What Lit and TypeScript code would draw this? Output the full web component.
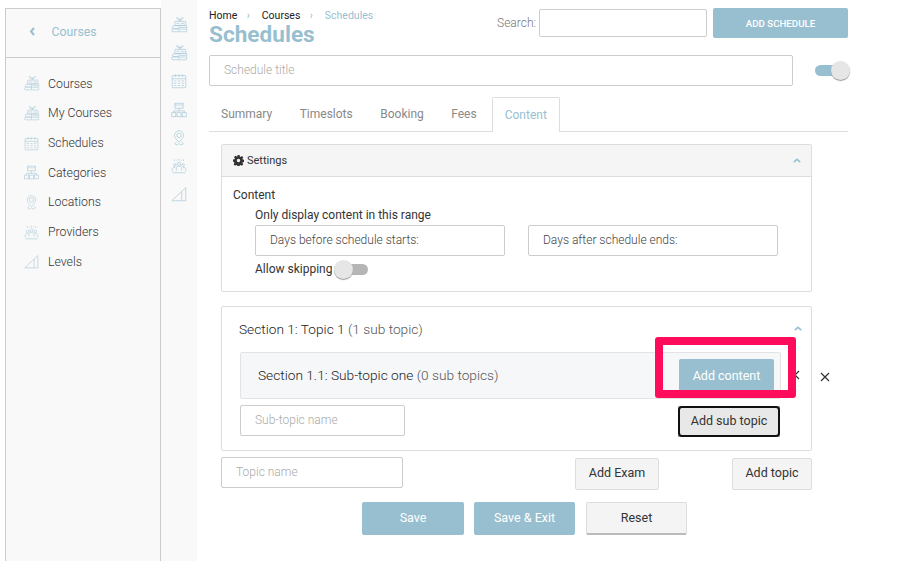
import { LitElement, html, css, svg } from "lit";
import { customElement } from "lit/decorators.js";

const icons: Record<string, unknown> = {
  course: svg`<path d="M11 6V3M11 4.500C10 2.500 8.500 1.800 7.500 1.800c0 1.700 1.500 2.700 3.500 2.700zM11 4.500c1-2 2.500-2.700 3.500-2.700 0 1.700-1.500 2.700-3.500 2.700z"/><rect x="5.500" y="6" width="12" height="4.500" rx=".5"/><path d="M7 8.200h3.500M12 8.200h4"/><rect x="10" y="10.500" width="8.500" height="7" rx=".5"/><path d="M11 12.700h6.500M11 14.500h6.500"/><path d="M10 10.800H4.500a1.700 1.700 0 0 0 0 3.400H10M10 14.200H3.500a1.600 1.600 0 0 0 0 3.300H10"/>`,
  calendar: svg`<rect x="2.500" y="4" width="15" height="13.500" rx=".8"/><path d="M2.500 7.500h15M6 2.500v3M10 2.500v3M14 2.500v3"/><path d="M4.500 10h2.500M8.800 10h2.500M13 10h2.500M4.500 12.500h2.500M8.800 12.500h2.500M13 12.500h2.500M4.500 15h2.500M8.800 15h2.500M13 15h2.500"/>`,
  tree: svg`<rect x="5.500" y="2.500" width="9" height="5.500"/><path d="M5.500 4.500h9M10 8v3M4 13v-2h12v2"/><rect x="2" y="13" width="4.500" height="4.500"/><rect x="7.800" y="13" width="4.500" height="4.500"/><rect x="13.500" y="13" width="4.500" height="4.500"/>`,
  pin: svg`<path d="M10 14.500c-3-3-5-5-5-7.500a5 5 0 0 1 10 0c0 2.500-2 4.500-5 7.500z"/><circle cx="10" cy="7" r="2.500"/><path d="M7.500 14.500c-1.500.5-2 1.200-2 1.800 0 .8 1 1.200 2 1.200 1.200 0 2-.5 2.500-1.500.5 1 1.300 1.500 2.500 1.500 1 0 2-.4 2-1.200 0-.6-.5-1.300-2-1.800"/>`,
  people: svg`<circle cx="10" cy="7.500" r="1.800"/><circle cx="5.500" cy="9" r="1.500"/><circle cx="14.500" cy="9" r="1.500"/><path d="M7 15v-2.500c0-1.500 1.500-2.500 3-2.500s3 1 3 2.500V15M2.500 16v-2.500c0-1.200 1-2 3-2M17.500 16v-2.500c0-1.200-1-2-3-2M3 17.500h14M5 2.500v2M10 2v2M15 2.500v2M7.500 3v1M12.500 3v1"/>`,
  level: svg`<path d="M2 17.500 17.500 3v14.500zM13 17.500V7.500"/>`,
};

const ico = (n: string) =>
  html`<svg class="ico" viewBox="0 0 20 20" fill="none" stroke="currentColor" stroke-width=".8">${icons[n]}</svg>`;

const nav = [
  ["course", "Courses"],
  ["course", "My Courses"],
  ["calendar", "Schedules"],
  ["tree", "Categories"],
  ["pin", "Locations"],
  ["people", "Providers"],
  ["level", "Levels"],
];

const up = html`<svg class="chev" viewBox="0 0 10 6" fill="none" stroke="currentColor" stroke-width="2"><path d="M1 5l4-3.500L9 5"/></svg>`;

@customElement("app-root")
export class AppRoot extends LitElement {
  static styles = css`
    :host { display: block; width: 913px; height: 561px; overflow: hidden; background: #fff;
      font-family: Roboto, "Liberation Sans", sans-serif; font-size: 12px; font-weight: 300; color: #444; position: relative; }
    * { box-sizing: border-box; }
    .page { display: flex; height: 561px; padding-left: 5px; }
    .sidebar { width: 156px; margin-top: 8px; background: #f9f9f9; border: 1px solid #ccc; border-bottom: 0; flex: none; }
    .side-head { height: 49px; border-bottom: 1px solid #ccc; display: flex; align-items: center; padding: 0 0 3px 23px; color: #97bfd0; font-size: 12.300px; font-weight: 400; }
    .side-head svg { width: 7px; height: 9px; margin-right: 15.500px; }
    .side-nav { padding-top: 11px; display: flex; flex-direction: column; }
    .side-nav a { height: 29.650px; display: flex; align-items: center; padding-left: 17px; gap: 8px; font-size: 12.300px; color: #333; }
    .ico { width: 17px; height: 17px; color: #b0cedb; flex: none; }
    .rail { width: 36px; flex: none; background: #f9f9f9; padding-top: 11px; display: flex; flex-direction: column; align-items: center; }
    .rail span { height: 28.200px; display: flex; align-items: center; justify-content: center; }
    .rail .ico { width: 18px; height: 18px; color: #a8c9d8; }
    main { width: 639px; margin-left: 12px; flex: none; display: flex; flex-direction: column; }
    .top { display: flex; height: 47px; align-items: flex-start; }
    .crumb-wrap { flex: 1; padding-top: 9px; }
    .crumb { font-size: 10.500px; line-height: 13px; color: #222; display: flex; gap: 9.500px; align-items: center; font-weight: 400; }
    .crumb i { font-style: normal; color: #97bfd0; font-size: 10px; font-weight: 500; width: 5.500px; }
    .crumb b { font-weight: 400; color: #97bfd0; }
    h1 { margin: -1px 0 0; font-size: 22.600px; line-height: 28px; font-weight: 700; color: #97bfd0; }
    .search { display: flex; align-items: center; gap: 3px; margin-top: 9px; color: #777; font-size: 12px; }
    .field { border: 1px solid #ccc; border-radius: 2px; background: #fff; display: flex; align-items: center; color: #aaa; font-size: 12px; padding-bottom: 1px; }
    .search .field { width: 168px; height: 28px; }
    .primary { background: #97bfd0; color: #fff; border: 0; border-radius: 2px; font: inherit; font-weight: 400; display: flex; align-items: center; justify-content: center; }
    .add-sched { width: 135px; height: 30px; margin: 8px 0 0 6px; font-size: 9.700px; font-weight: 500; }
    .title-row { display: flex; align-items: center; margin-top: 8px; }
    .title-row .field { width: 584.500px; height: 31px; padding-left: 14px; }
    .toggle { position: relative; width: 33px; height: 11px; border-radius: 6px; background: #97bfd0; flex: none; }
    .toggle::after { content: ""; position: absolute; top: -4px; width: 19px; height: 19px; border-radius: 50%; background: #e6e6e6; box-shadow: 0 1px 1px #999; }
    .toggle.on { margin: 0 0 0 22.500px; }
    .toggle.on::after { right: -2px; }
    .toggle.off { background: #b5b5b5; width: 30px; margin-left: 6px; }
    .toggle.off::after { left: -4px; }
    .tabs { display: flex; margin-top: 11px; height: 35px; border-bottom: 1px solid #ddd; color: #888; font-size: 12px; padding-left: 12px; font-weight: 400; }
    .tabs span { margin-right: 27.500px; padding-top: 10px; }
    .tabs .fees { margin-right: 15px; }
    .tabs .active { margin: 0; height: 35px; border: 1px solid #ddd; border-bottom: 0; border-radius: 2px 2px 0 0; background: #fff; padding: 10px 12px 0; color: #97bfd0; width: 68px; }
    .content { margin: 12px 36px 0 12px; width: 591px; }
    .card { border: 1px solid #ddd; border-radius: 2px; background: #fff; }
    .card-head { height: 32px; background: #f5f5f5; border-bottom: 1px solid #ddd; display: flex; align-items: center; justify-content: space-between; padding: 0 10px 0 11px; font-size: 11px; color: #333; font-weight: 400; }
    .card-head div { display: flex; align-items: center; gap: 3px; }
    .chev { width: 8px; height: 5px; color: #97bfd0; }
    .card-body { padding: 11px 11px 0; height: 114px; }
    .lab { line-height: 14px; color: #333; font-weight: 400; }
    .nest { padding-left: 22px; margin-top: 6px; }
    .ranges { display: flex; gap: 23px; margin-top: 3px; }
    .ranges .field { width: 250px; height: 31px; padding-left: 14px; color: #444; font-weight: 300; }
    .skip { display: flex; align-items: center; margin-top: 6px; height: 14px; color: #333; font-weight: 400; }
    .topic { margin-top: 14px; height: 145px; padding: 0 18px; position: relative; }
    .topic-title { height: 45px; display: flex; align-items: center; justify-content: space-between; font-size: 13.700px; color: #222; padding-bottom: 2px; margin: 0 -9px 0 -1px; }
    .topic-title em, .sub em { font-style: normal; color: #555; }
    .sub { width: 541px; height: 47px; background: #f6f7f9; border: 1px solid #e3e3e3; border-radius: 2px; display: flex; align-items: center; justify-content: space-between; padding: 0 6px 2px 17px; font-size: 13.700px; color: #222; }
    .add-content { width: 95px; height: 33px; font-size: 12.500px; align-self: flex-start; margin-top: 6px; padding-bottom: 2px; }
    .sub-row { display: flex; justify-content: space-between; align-items: flex-start; margin-top: 6px; width: 540px; }
    .sub-row .field { width: 165px; height: 31px; padding-left: 14px; }
    .btn { background: #f4f4f4; border: 1px solid #ddd; border-radius: 2px; color: #333; font: inherit; font-weight: 400; font-size: 12.500px; display: flex; align-items: center; justify-content: center; padding: 0 0 3px; }
    .focus-wrap { width: 102px; height: 31px; margin-top: 1px; background: #aaa; }
    .focus { width: 102px; height: 31px; background: #e8e8e8; border: 2px solid #111; border-radius: 4px; padding-bottom: 2px; }
    .topic-row { display: flex; align-items: flex-start; margin-top: 6px; }
    .topic-row .field { width: 182px; height: 31px; padding-left: 14px; }
    .exam { width: 84px; height: 32px; margin: 1px 0 0 172px; }
    .addt { width: 80px; height: 32px; margin: 1px 0 0 73px; }
    .actions { display: flex; gap: 10px; margin: 12px 0 0 141px; }
    .actions > * { width: 102px; height: 33px; font-size: 12.500px; padding: 0 0 3px; }
    .actions .sx { width: 101px; margin-right: 1px; }
    .actions .btn { width: 101px; border-bottom: 2px solid #bbb; padding-bottom: 2px; }
    .mark { position: absolute; left: 655px; top: 337px; width: 141px; height: 61px; border: 8px solid #ff0d5c; border-radius: 3px; }
    .x { position: absolute; width: 10px; height: 10px; color: #333; }
  `;

  render() {
    return html`<div class="page">
        <aside class="sidebar">
          <div class="side-head">
            <svg viewBox="0 0 7 9" fill="none" stroke="currentColor" stroke-width="2"><path d="M5 1 2 4.500 5 8"/></svg>
            Courses
          </div>
          <nav class="side-nav">
            ${nav.map(([i, t]) => html`<a>${ico(i)}${t}</a>`)}
          </nav>
        </aside>
        <div class="rail">${nav.map(([i]) => html`<span>${ico(i)}</span>`)}</div>
        <main>
          <div class="top">
            <div class="crumb-wrap">
              <div class="crumb"><span>Home</span><i>›</i><span>Courses</span><i>›</i><b>Schedules</b></div>
              <h1>Schedules</h1>
            </div>
            <div class="search">Search:<div class="field"></div></div>
            <button class="primary add-sched">ADD SCHEDULE</button>
          </div>
          <div class="title-row">
            <div class="field">Schedule title</div>
            <div class="toggle on"></div>
          </div>
          <div class="tabs">
            <span>Summary</span><span>Timeslots</span><span>Booking</span><span class="fees">Fees</span><span class="active">Content</span>
          </div>
          <div class="content">
            <section class="card">
              <div class="card-head">
                <div>
                  <svg width="11" height="11" viewBox="0 0 16 16" fill="#333"><path fill-rule="evenodd" d="M6.500 0h3l.4 2.200 1.300.6L13 1.500 15 3.600l-1.300 1.800.5 1.300 2.200.4v3l-2.200.4-.5 1.300 1.300 1.800-2.100 2-1.800-1.200-1.300.5-.4 2.200h-3l-.4-2.200-1.300-.5-1.800 1.200-2-2 1.200-1.800-.5-1.300L0 9.500v-3l2.200-.4.5-1.300L1.500 3l2.100-2L5.400 2.300l1.300-.5zM8 5.500a2.500 2.500 0 1 0 0 5 2.500 2.500 0 0 0 0-5z"/></svg>
                  Settings
                </div>
                ${up}
              </div>
              <div class="card-body">
                <div class="lab">Content</div>
                <div class="nest">
                  <div class="lab">Only display content in this range</div>
                  <div class="ranges">
                    <div class="field">Days before schedule starts:</div>
                    <div class="field">Days after schedule ends:</div>
                  </div>
                  <div class="skip">Allow skipping<div class="toggle off"></div></div>
                </div>
              </div>
            </section>
            <section class="card topic">
              <div class="topic-title"><span>Section 1: Topic 1 <em>(1 sub topic)</em></span>${up}</div>
              <div class="sub">
                <span>Section 1.1: Sub-topic one <em>(0 sub topics)</em></span>
                <button class="primary add-content">Add content</button>
              </div>
              <div class="sub-row">
                <div class="field">Sub-topic name</div>
                <div class="focus-wrap"><button class="btn focus">Add sub topic</button></div>
              </div>
            </section>
            <div class="topic-row">
              <div class="field">Topic name</div>
              <button class="btn exam">Add Exam</button>
              <button class="btn addt">Add topic</button>
            </div>
            <div class="actions">
              <button class="primary">Save</button>
              <button class="primary sx">Save &amp; Exit</button>
              <button class="btn">Reset</button>
            </div>
          </div>
        </main>
      </div>
      <svg class="x" style="left:790px;top:370px" viewBox="0 0 10 10" stroke="currentColor" stroke-width="1.200"><path d="M1 1l8 8M9 1 1 9"/></svg>
      <svg class="x" style="left:820px;top:372px" viewBox="0 0 10 10" stroke="currentColor" stroke-width="1.200"><path d="M1 1l8 8M9 1 1 9"/></svg>
      <div class="mark"></div>`;
  }
}
